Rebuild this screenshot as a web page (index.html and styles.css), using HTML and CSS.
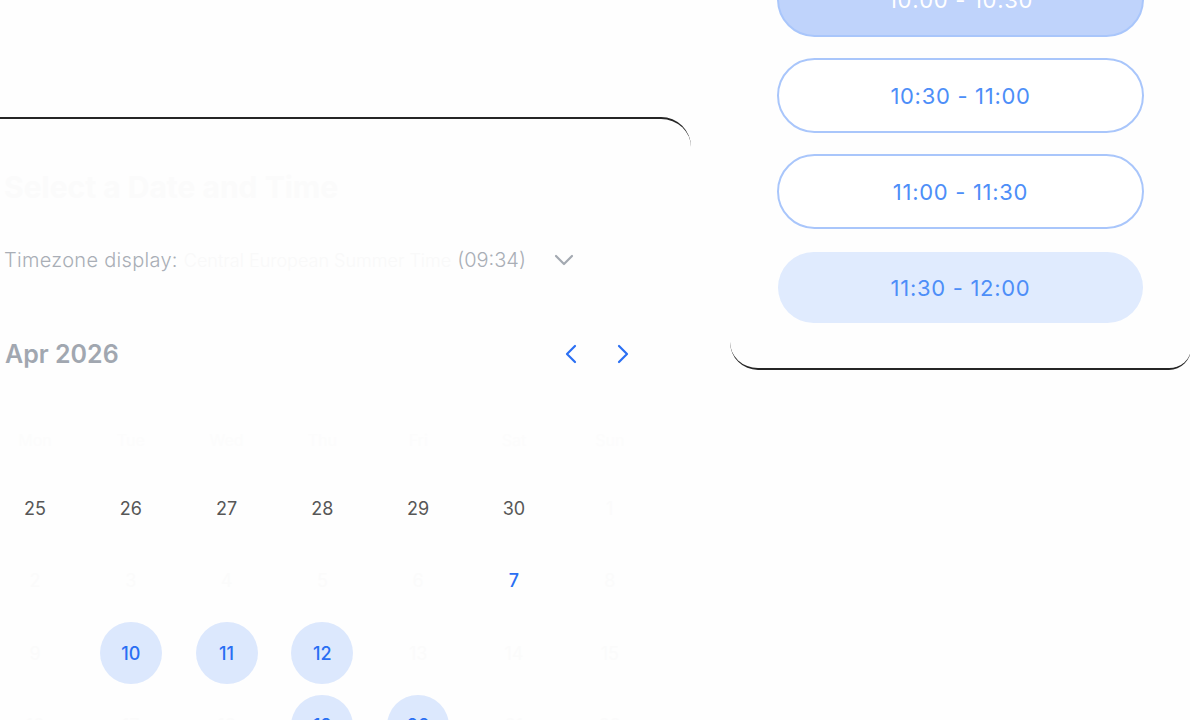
FILE: index.html
```html
<!DOCTYPE html>
<html lang="en">
<head>
<meta charset="utf-8">
<title>Select a Date and Time</title>
<link rel="stylesheet" href="styles.css">
</head>
<body>
<div class="page">
  <section class="cal-card">
    <h1 class="title">Select a Date and Time</h1>
    <div class="tz-row">
      <span class="tz-label">Timezone display:</span>
      <span class="tz-name">Central European Summer Time</span>
      <span class="tz-time">(09:34)</span>
      <svg class="tz-chev" width="20" height="12" viewBox="0 0 20 12"><path d="M2 2 L10 10 L18 2" fill="none" stroke="#a3a9b1" stroke-width="2.2" stroke-linecap="round" stroke-linejoin="round"/></svg>
    </div>
    <div class="month-row">
      <span class="month">Apr 2026</span>
      <div class="nav">
        <button class="nav-btn" aria-label="Previous month"><svg width="14" height="20" viewBox="0 0 14 20"><path d="M11 2 L3 10 L11 18" fill="none" stroke="#2a6ff3" stroke-width="2.2" stroke-linecap="round" stroke-linejoin="round"/></svg></button>
        <button class="nav-btn" aria-label="Next month"><svg width="14" height="20" viewBox="0 0 14 20"><path d="M3 2 L11 10 L3 18" fill="none" stroke="#2a6ff3" stroke-width="2.2" stroke-linecap="round" stroke-linejoin="round"/></svg></button>
      </div>
    </div>
    <div class="weekdays">
      <span>Mon</span><span>Tue</span><span>Wed</span><span>Thu</span><span>Fri</span><span>Sat</span><span>Sun</span>
    </div>
    <div class="grid">
      <span class="day prev">25</span><span class="day prev">26</span><span class="day prev">27</span><span class="day prev">28</span><span class="day prev">29</span><span class="day prev">30</span><span class="day off">1</span>
      <span class="day off">2</span><span class="day off">3</span><span class="day off">4</span><span class="day off">5</span><span class="day off">6</span><span class="day today">7</span><span class="day off">8</span>
      <span class="day off">9</span><span class="day avail">10</span><span class="day avail">11</span><span class="day avail">12</span><span class="day off">13</span><span class="day off">14</span><span class="day off">15</span>
      <span class="day off">16</span><span class="day off">17</span><span class="day off">18</span><span class="day avail">19</span><span class="day avail">20</span><span class="day off">21</span><span class="day off">22</span>
    </div>
  </section>
  <section class="slot-card">
    <button class="slot selected">10:00 - 10:30</button>
    <button class="slot">10:30 - 11:00</button>
    <button class="slot">11:00 - 11:30</button>
    <button class="slot hover">11:30 - 12:00</button>
  </section>
</div>
</body>
</html>
```

FILE: styles.css
```css
html, body {
  margin: 0;
  padding: 0;
  background: #fefefe;
  overflow: hidden;
  width: 1190px;
  height: 720px;
}
body {
  font-family: Inter, "Noto Sans", sans-serif;
}
.page {
  display: flex;
  align-items: flex-start;
  gap: 39px;
}
.cal-card {
  flex: none;
  box-sizing: border-box;
  width: 731px;
  margin-left: -40px;
  margin-top: 117px;
  padding: 50px 50px 0 44px;
  background: #fefefe;
  border-top: 2px solid #252525;
  border-top-right-radius: 30px;
}
.title {
  margin: 0;
  font-size: 30px;
  line-height: 36px;
  font-weight: 700;
  color: #fbfbfb;
}
.tz-row {
  margin-top: 41px;
  display: flex;
  align-items: center;
  height: 28px;
  font-size: 20px;
  font-weight: 300;
}
.tz-label {
  color: #a9aeb6;
  letter-spacing: 0.3px;
}
.tz-name {
  margin-left: 6px;
  font-size: 18px;
  color: #f9f9f9;
}
.tz-time {
  margin-left: 6px;
  color: #a9aeb6;
}
.tz-chev {
  margin-left: 28px;
}
.month-row {
  margin-top: 62px;
  display: flex;
  align-items: center;
  justify-content: space-between;
  height: 36px;
}
.month {
  font-size: 25px;
  font-weight: 600;
  color: #a1a7b0;
  margin-left: 1px;
}
.nav {
  display: flex;
  gap: 16px;
}
.nav-btn {
  width: 36px;
  height: 36px;
  padding: 0;
  border: 0;
  background: none;
  display: flex;
  align-items: center;
  justify-content: center;
}
.weekdays {
  margin-top: 56px;
  display: grid;
  grid-template-columns: repeat(7, 62px);
  column-gap: 33.8px;
  height: 24px;
  font-size: 16px;
  line-height: 24px;
  color: #fcfcfc;
  text-align: center;
}
.grid {
  margin-top: 25px;
  display: grid;
  grid-template-columns: repeat(7, 62px);
  grid-auto-rows: 62px;
  column-gap: 33.8px;
  row-gap: 10.5px;
}
.day {
  display: flex;
  align-items: center;
  justify-content: center;
  border-radius: 50%;
  font-size: 18px;
}
.day.prev {
  color: #575757;
}
.day.off {
  color: #fbfbfb;
}
.day.today {
  color: #2a6ff3;
  font-weight: 500;
}
.day.avail {
  color: #2a6ff3;
  background: #dce8fd;
  font-weight: 500;
}
.slot-card {
  flex: none;
  box-sizing: border-box;
  width: 461px;
  margin-top: -60px;
  padding: 22px 47px 43px 47px;
  background: #fefefe;
  border-bottom: 2px solid #252525;
  border-bottom-left-radius: 28px;
  border-bottom-right-radius: 22px;
  display: flex;
  flex-direction: column;
  gap: 21px;
}
.slot {
  box-sizing: border-box;
  height: 75px;
  width: 100%;
  border: 2px solid #a9c6fb;
  border-radius: 40px;
  background: #ffffff;
  color: #4d8ef8;
  font-family: Inter, "Noto Sans", sans-serif;
  font-size: 22px;
  font-weight: 400;
  letter-spacing: 0.7px;
  padding: 0;
}
.slot.selected {
  background: #bfd3fb;
  color: #ffffff;
}
.slot.hover {
  border: 0;
  background: #e0ebfe;
  height: 71px;
  width: auto;
  margin: 2px 1px;
}
```
